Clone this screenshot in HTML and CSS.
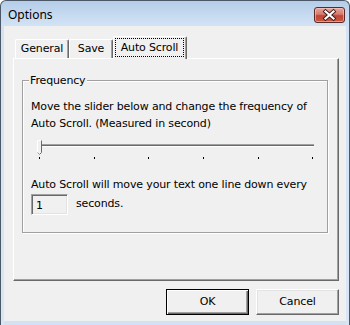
FILE: index.html
```html
<!DOCTYPE html>
<html>
<head>
<meta charset="utf-8">
<link rel="stylesheet" href="styles.css">
</head>
<body>
<div class="window">
  <div class="titlebar">
    <span class="title">Options</span>
    <div class="close">
      <svg width="31" height="16" viewBox="0 0 31 16">
        <path d="M11.5 4.5 L19.5 11.5 M19.5 4.5 L11.5 11.5" stroke="#3d1a18" stroke-width="4" stroke-linecap="square"/>
        <path d="M11.5 4.5 L19.5 11.5 M19.5 4.5 L11.5 11.5" stroke="#ffffff" stroke-width="2.2" stroke-linecap="square"/>
      </svg>
    </div>
  </div>
  <div class="client">
    <div class="tabs">
      <div class="tab">General</div>
      <div class="tab">Save</div>
      <div class="tab active"><span class="focus">Auto Scroll</span></div>
    </div>
    <div class="panel">
      <div class="group">
        <span class="legend">Frequency</span>
        <p class="text">Move the slider below and change the frequency of<br>Auto Scroll. (Measured in second)</p>
        <svg class="slider" width="290" height="22" viewBox="0 0 290 22">
          <rect x="10" y="5" width="274" height="1" fill="#a0a0a0"/>
          <rect x="10" y="6" width="274" height="1" fill="#696969"/>
          <rect x="10" y="7" width="274" height="1" fill="#ffffff"/>
          <g fill="#000">
            <rect x="9" y="18" width="1" height="2"/>
            <rect x="64" y="18" width="1" height="2"/>
            <rect x="118" y="18" width="1" height="2"/>
            <rect x="173" y="18" width="1" height="2"/>
            <rect x="228" y="18" width="1" height="2"/>
            <rect x="282" y="18" width="1" height="2"/>
          </g>
          <path d="M7.5 1.5 H11.5 V13.5 L9.5 15.5 L7.5 13.5 Z" fill="#f0f0f0" stroke="none"/>
          <path d="M7.5 13.5 V1.5 H11" stroke="#fff" fill="none"/>
          <path d="M11.5 1.5 V13.5 L9.5 15.5" stroke="#696969" fill="none"/>
          <path d="M7.5 13.5 L9.5 15.5" stroke="#a0a0a0" fill="none"/>
        </svg>
        <p class="text line3">Auto Scroll will move your text one line down every</p>
        <div class="row">
          <div class="input">1</div>
          <span class="unit">seconds.</span>
        </div>
      </div>
    </div>
    <div class="buttons">
      <div class="btn default">OK</div>
      <div class="btn">Cancel</div>
    </div>
  </div>
</div>
</body>
</html>
```

FILE: styles.css
```css
html, body {
  margin: 0;
  padding: 0;
  background: #ffffff;
}

.window {
  width: 350px;
  height: 325px;
  box-sizing: border-box;
  border: 1px solid #4d5866;
  border-bottom: none;
  border-radius: 6px 6px 0 0;
  background: linear-gradient(180deg, #b4cde9 0px, #c6daf0 14px, #d3e3f4 26px, #d8e6f5 100%);
  display: flex;
  flex-direction: column;
  overflow: hidden;
  font-family: "DejaVu Sans", sans-serif;
  font-size: 11px;
  letter-spacing: -0.15px;
  color: #000;
}

.titlebar {
  height: 25px;
  flex: none;
  display: flex;
  align-items: center;
  justify-content: space-between;
  padding: 0 4px 0 7px;
}

.title {
  font-family: "Noto Sans", "Open Sans", sans-serif;
  font-size: 12px;
  letter-spacing: 0;
  color: #000;
  margin-top: 1px;
}

.close {
  width: 31px;
  height: 16px;
  box-sizing: border-box;
  border: 1px solid #5b2a24;
  border-radius: 3px;
  background: linear-gradient(180deg, #e6a79c 0%, #d67a6c 45%, #c24534 55%, #c85a45 100%);
  box-shadow: inset 0 0 0 1px rgba(255, 210, 200, 0.55);
  display: flex;
  margin-top: 2px;
}

.close svg {
  margin: -1px;
}

.client {
  flex: 1;
  margin: 0 3px 0 3px;
  background: #f0f0f0;
  border-bottom: 4px solid #d2e2f4;
  box-shadow: 0 1px 0 #5aa9d9;
  display: flex;
  flex-direction: column;
  position: relative;
}

.tabs {
  display: flex;
  align-items: flex-end;
  margin: 9px 0 0 11px;
  height: 23px;
  position: relative;
  z-index: 2;
}

.tab {
  box-sizing: border-box;
  height: 19px;
  border-top: 1px solid #fff;
  border-left: 1px solid #fff;
  border-right: 1px solid #696969;
  box-shadow: inset -1px 0 0 #a0a0a0;
  border-radius: 2px 2px 0 0;
  display: flex;
  align-items: center;
  justify-content: center;
  padding-bottom: 1px;
  background: #f0f0f0;
}

.tab:nth-child(1) { width: 54px; }
.tab:nth-child(2) { width: 44px; }

.tab.active {
  width: 74px;
  height: 23px;
  margin-bottom: -1px;
  padding: 1px 2px 2px 1px;
}

.focus {
  flex: 1;
  align-self: stretch;
  display: flex;
  align-items: center;
  justify-content: center;
  outline: 1px dotted #000;
  outline-offset: -1px;
  padding-bottom: 1px;
}

.panel {
  margin-left: 9px;
  width: 326px;
  height: 223px;
  box-sizing: border-box;
  border-top: 1px solid #fff;
  border-left: 1px solid #fff;
  border-right: 1px solid #696969;
  border-bottom: 1px solid #696969;
  box-shadow: inset -1px -1px 0 #a0a0a0;
  position: relative;
  z-index: 1;
}

.group {
  position: relative;
  margin: 21px 0 0 8px;
  width: 306px;
  height: 153px;
  box-sizing: border-box;
  border: 1px solid #a0a0a0;
  box-shadow: 1px 1px 0 #fff, inset 1px 1px 0 #fff;
  padding: 0 0 0 8px;
  display: flex;
  flex-direction: column;
}

.legend {
  position: absolute;
  left: 6px;
  top: -8px;
  padding: 0 2px 0 1px;
  background: #f0f0f0;
  line-height: 15px;
}

.text {
  margin: 17px 0 0 0;
  line-height: 17px;
}

.slider {
  display: block;
  margin: 7px 0 0 -1px;
}

.line3 {
  margin-top: 15px;
}

.row {
  display: flex;
  align-items: center;
  margin-top: 1px;
}

.input {
  width: 37px;
  height: 21px;
  box-sizing: border-box;
  border-top: 1px solid #a0a0a0;
  border-left: 1px solid #a0a0a0;
  border-right: 1px solid #fff;
  border-bottom: 1px solid #fff;
  box-shadow: inset 1px 1px 0 #696969, inset -1px -1px 0 #e3e3e3;
  padding: 3px 0 0 4px;
  line-height: 15px;
}

.unit {
  margin-left: 8px;
  margin-top: -2px;
}

.buttons {
  display: flex;
  justify-content: flex-end;
  gap: 7px;
  margin: 8px 7px 0 0;
}

.btn {
  width: 83px;
  height: 26px;
  box-sizing: border-box;
  border: 1px solid;
  border-color: #fff #696969 #696969 #fff;
  box-shadow: inset -1px -1px 0 #a0a0a0, inset 1px 1px 0 #e3e3e3;
  display: flex;
  align-items: center;
  justify-content: center;
  padding-bottom: 1px;
}

.btn.default {
  border-color: #000;
  box-shadow: inset 1px 1px 0 #fff, inset -1px -1px 0 #696969, inset -2px -2px 0 #a0a0a0;
}
```
